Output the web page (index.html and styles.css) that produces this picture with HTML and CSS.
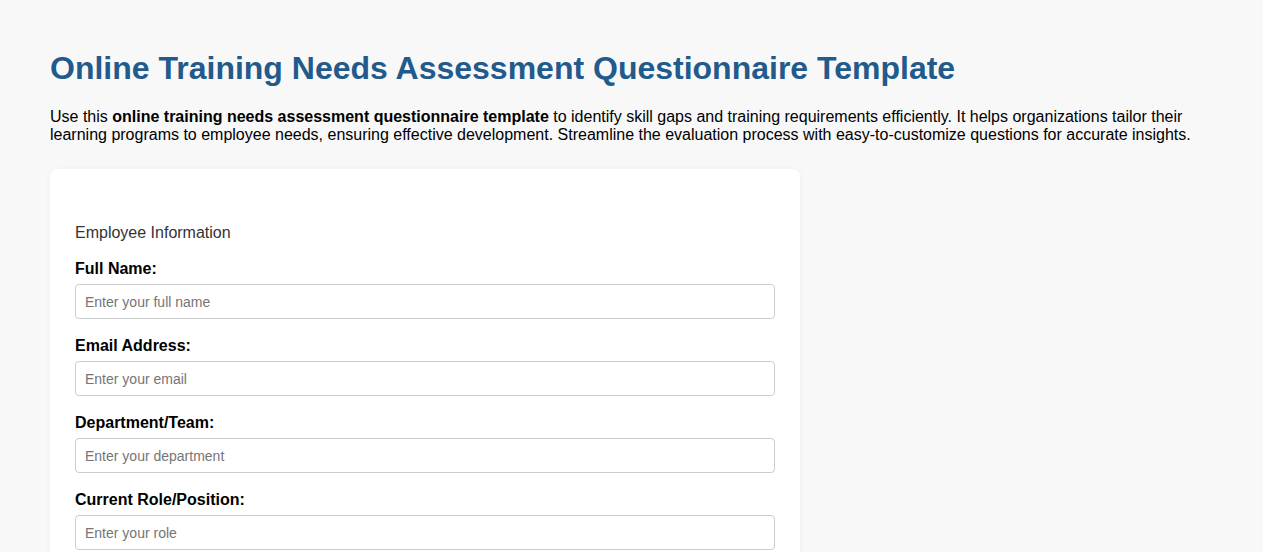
FILE: index.html
```html
<!DOCTYPE html>
<html lang="en">
<head>
<meta charset="utf-8">
<title>Online Training Needs Assessment Questionnaire Template</title>
<link rel="stylesheet" href="styles.css">
</head>
<body>
<div class="page">
  <h1 class="title">Online Training Needs Assessment Questionnaire Template</h1>
  <p class="intro">Use this <strong>online training needs assessment questionnaire template</strong> to identify skill gaps and training requirements efficiently. It helps organizations tailor their learning programs to employee needs, ensuring effective development. Streamline the evaluation process with easy-to-customize questions for accurate insights.</p>
  <form class="card">
    <div class="section-title">Employee Information</div>
    <label class="field-label" for="name">Full Name:</label>
    <input class="field-input" id="name" type="text" placeholder="Enter your full name">
    <label class="field-label" for="email">Email Address:</label>
    <input class="field-input" id="email" type="email" placeholder="Enter your email">
    <label class="field-label" for="dept">Department/Team:</label>
    <input class="field-input" id="dept" type="text" placeholder="Enter your department">
    <label class="field-label" for="role">Current Role/Position:</label>
    <input class="field-input" id="role" type="text" placeholder="Enter your role">
    <label class="field-label" for="exp">Years of Experience:</label>
    <input class="field-input" id="exp" type="text" placeholder="Enter your years of experience">
  </form>
</div>
</body>
</html>
```
FILE: styles.css
```css
html, body {
  margin: 0;
  padding: 0;
}
body {
  background: #f8f8f8;
  font-family: "Liberation Sans", Arial, sans-serif;
  color: #000;
}
.page {
  padding: 50px 50px 50px 50px;
}
.title {
  margin: 0;
  font-size: 32px;
  line-height: 37px;
  font-weight: bold;
  color: #235a8c;
}
.intro {
  margin: 21px 0 25px 0;
  font-size: 16px;
  line-height: 18px;
}
.card {
  width: 750px;
  box-sizing: border-box;
  background: #fff;
  border-radius: 8px;
  box-shadow: 0 0 6px rgba(0, 0, 0, 0.04);
  padding: 55px 25px 25px 25px;
  display: flex;
  flex-direction: column;
}
.section-title {
  font-size: 16px;
  line-height: 18px;
  color: #333;
  margin-bottom: 18px;
}
.field-label {
  display: block;
  font-size: 16px;
  line-height: 18px;
  font-weight: bold;
  margin-bottom: 6px;
}
.field-input {
  display: block;
  width: 700px;
  height: 35px;
  box-sizing: border-box;
  border: 1px solid #ccc;
  border-radius: 4px;
  padding: 0 9px;
  font-family: "Liberation Sans", Arial, sans-serif;
  font-size: 14px;
  margin: 0 0 18px 0;
  background: #fff;
}
.field-input::placeholder {
  color: #757575;
}
```
